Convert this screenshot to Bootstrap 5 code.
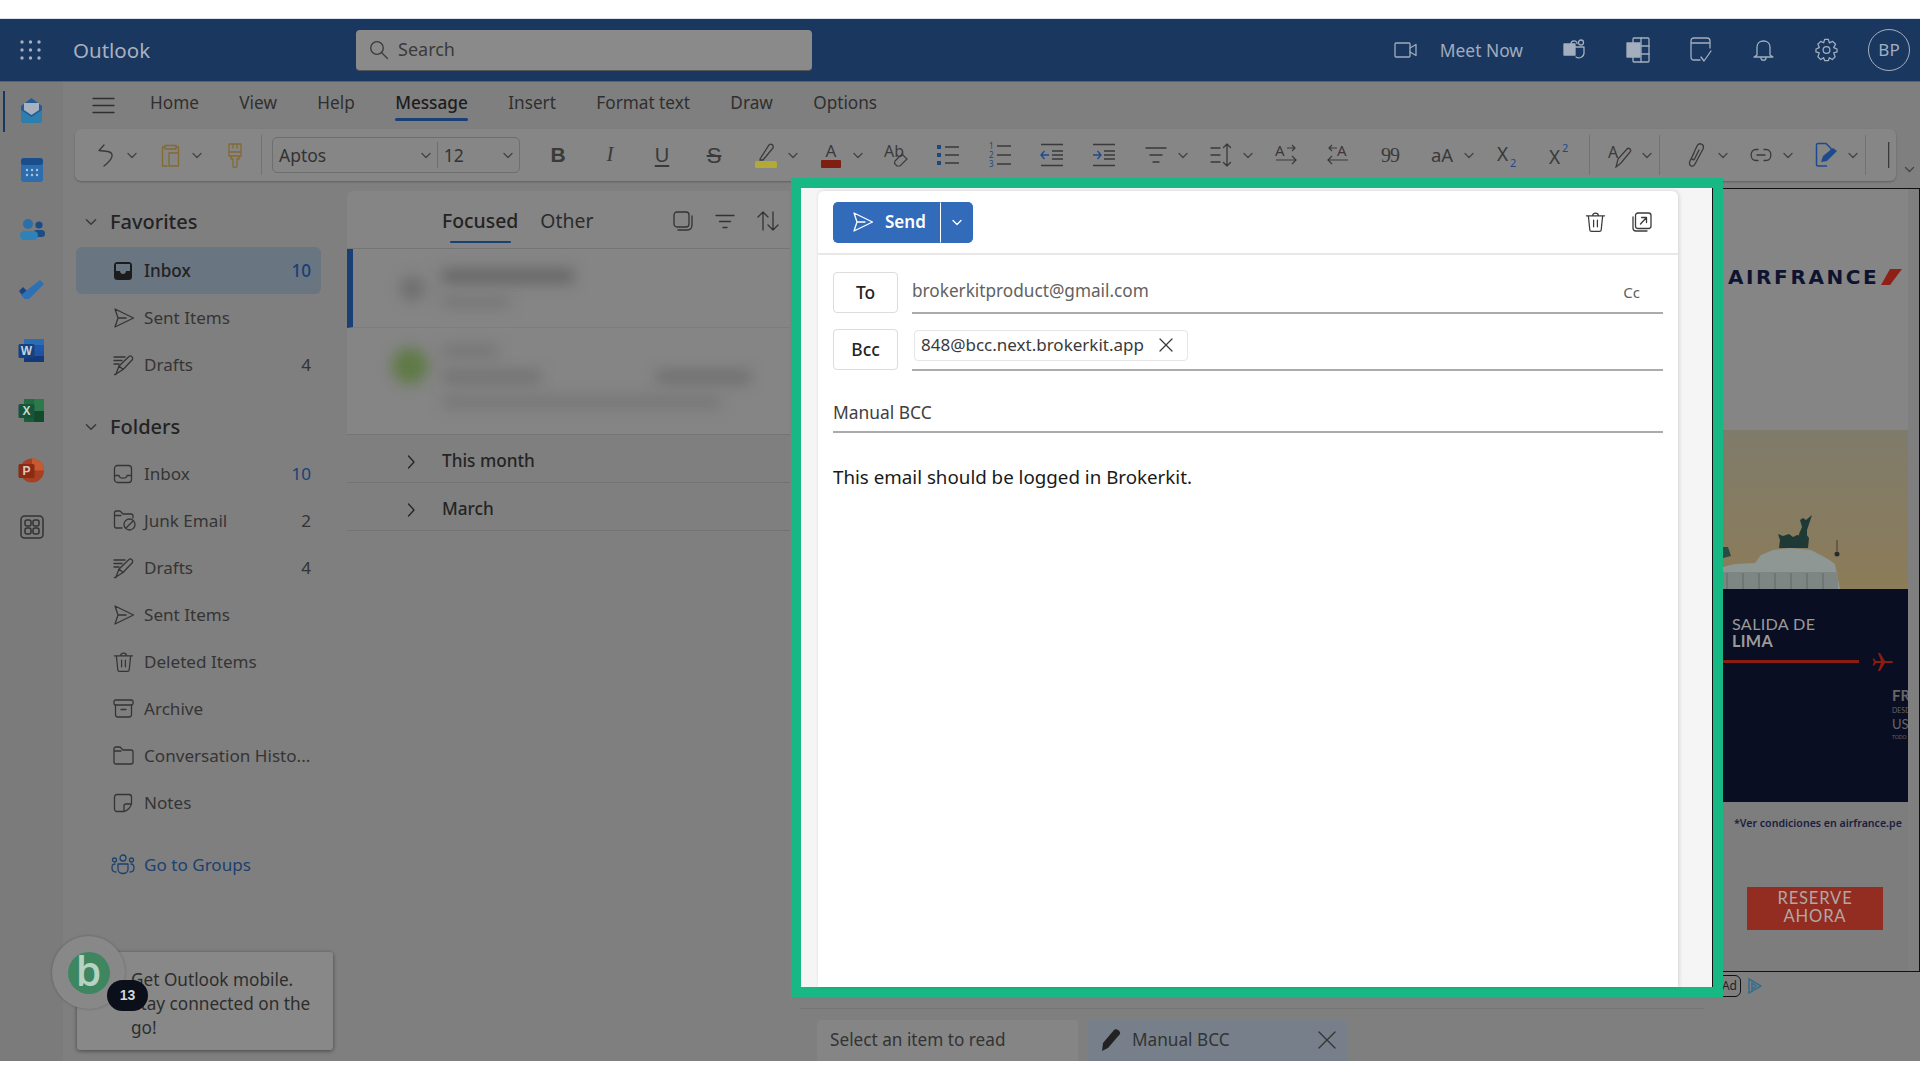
<!doctype html>
<html lang="en">
<head>
<meta charset="utf-8">
<title>Outlook</title>
<link href="https://cdn.jsdelivr.net/npm/bootstrap@5.3.0/dist/css/bootstrap.min.css" rel="stylesheet">
<style>
html,body{height:100%;margin:0;background:#fff;overflow:hidden}
body{font-family:"Noto Sans","Open Sans",sans-serif;color:#2b2b2b}
.topgap{height:18px;background:#fff;border-bottom:1px solid #dbe3ee;box-sizing:content-box}
.app{height:1042px;position:relative;background:#7f7f7f;overflow:hidden}
.ico{fill:none;stroke:currentColor;stroke-width:1.3;stroke-linecap:round;stroke-linejoin:round;flex:none}
.hdr{height:63px;background:#1a3760;color:#a5afbd;border-bottom:1px solid #52647d}
.grid-ic{margin-left:20px;width:21px;height:20px;color:#a5afbd}
.brand{margin-left:32px;font-size:20.5px;width:283px;color:#a9b1bd}
.searchbox{width:456px;height:41px;background:#8a8a8a;border-radius:4px;border-bottom:1px solid #555;color:#3a3a3a;font-size:18px;padding-left:13px;gap:9px}
.meet{font-size:17.4px;gap:23px;margin-right:20px;color:#a0acbc}
.hcell{width:63px;justify-content:center;color:#a3afbe}
.avatar-bp{width:42px;height:42px;border-radius:50%;border:1px solid #a3afbe;font-size:17px;margin:0 10px 0 10px;color:#a3afbe}
.rail{width:63px;background:#7b7b7b;padding-top:13px;gap:30px}
.rail-item{height:30px;position:relative;justify-content:center;align-items:center}
.rail-item.on::before{content:"";position:absolute;left:3px;top:-4px;height:41px;width:2px;background:#1a3760}
.rail-item.last{margin-top:-3px}
.mainc{width:1857px}
.ribbon{height:47px;padding-left:29px;font-size:17.2px;color:#2f2f2f}
.rib-tabs{gap:40.4px;margin-left:35px}
.rib-tab{position:relative;height:47px;display:flex;align-items:center;padding-bottom:5px}
.rib-tab.on{font-weight:500;color:#1c1c1c}
.rib-tab.on::after{content:"";position:absolute;left:0;right:0;bottom:8px;height:3px;border-radius:2px;background:#1a3f75}
.tbar-row{height:52px;padding-left:12px}
.tbar{width:1821px;height:52px;background:#868686;border-radius:6px;box-shadow:0 1px 2px rgba(0,0,0,.25);padding-left:4px;color:#3a3a3a}
.tool{width:52px;height:52px;display:flex;align-items:center;justify-content:center;flex:none;font-size:21px}
.tool-c{width:65px;height:52px;display:flex;align-items:center;flex:none}
.tool-c>.tool{flex:none}
.tool-q{font-size:20px;letter-spacing:-1px;font-family:"Liberation Serif",serif}
.tool-a{font-size:18.5px}
.after-sep{margin-left:10px}
.undo-shift{margin-left:4px}
.chv{width:10px;height:7px;margin-left:-4px;color:#444}
.chv-end{width:11px;margin:0 0 8px 8px}
.tsep{width:1px;height:40px;background:#727272;flex:none}
.combo{width:248px;height:36px;border:1px solid #6e6e6e;border-radius:5px;font-size:17.5px;margin-left:10px;margin-right:12px;color:#333}
.combo-a{width:166px;border-right:1px solid #6e6e6e;padding:0 6px;justify-content:space-between}
.combo-b{width:82px;padding:0 6px;justify-content:space-between}
.tb-b{font-weight:700;font-family:"Liberation Sans",sans-serif}
.tb-i{font-style:italic;font-family:"Liberation Serif",serif}
.tb-u{text-decoration:underline;font-weight:400;font-size:20px;font-family:"Liberation Sans",sans-serif;text-underline-offset:3px}
.tb-s{text-decoration:line-through;font-size:22px;font-family:"Liberation Sans",sans-serif}
.caret-line{margin-left:22px}
.workarea{height:880px}
.foldp{width:284px;padding-top:17px;font-size:17.1px;color:#333}
.fgroup{height:47px;font-size:20px;font-weight:500;padding-left:22px;gap:13px;color:#232323}
.fitems{margin-left:13px;width:245px;margin-top:2px}
.fitems.second{margin-top:0}
.fitem{height:47px;padding:0 10px 0 37px;color:#353535;border-radius:6px}
.fitem .ficon{width:31px;flex:none;display:flex;align-items:center}
.fitem .cnt{margin-left:auto;color:#333}
.fitem .blue{color:#1a3f75}
.fitem.sel{background:#6a7582;font-weight:500;color:#222}
.gotogrp{color:#1c406f;margin-top:15px}
.grp-ic{color:#1c406f;margin-left:-2px}
.chev-d{color:#3a3a3a}
.folders-head{margin-top:15px}
.mobtip{margin:auto 0 11px 14px;width:256px;height:98px;background:#888;border-radius:3px;box-shadow:0 1px 4px rgba(0,0,0,.45);padding:16px 10px 0 54px;font-size:17.2px;line-height:24px;color:#2d2d2d}
.listp{width:443px}
.list-head{margin-top:10px;height:58px;background:#858585;border-bottom:1px solid #757575;border-top-left-radius:6px;font-size:19.4px;color:#2b2b2b;position:relative;padding-top:3px}
.ltab1{margin-left:95px;font-weight:500;position:relative;color:#232323}
.ltab1::after{content:"";position:absolute;left:8px;right:7px;bottom:-7px;height:2px;background:#1a3f75;border-radius:2px}
.ltab2{margin-left:22px}
.lh-icons{margin-left:auto;gap:22px;margin-right:11px;color:#333}
.blurrows{height:186px;background:#858585;border-bottom:1px solid #747474;overflow:hidden}
.brow1{height:79px;border-left:6px solid #1a3f75;padding-left:47px;gap:0;border-bottom:1px solid #7d7d7d}
.brow2{height:105px;padding-left:45px}
.blob{display:block;filter:blur(7px)}
.bl-ava1{width:25px;height:25px;border-radius:50%;background:#6f6f6f;margin-right:17px}
.bl-ava2{width:36px;height:36px;border-radius:50%;background:#5f7a46;margin:0 15px 0 0;align-self:flex-start;margin-top:20px}
.bl-a{width:132px;height:14px;background:#666}
.bl-b{width:68px;height:10px;background:#747474;margin-top:14px}
.bl-c{width:55px;height:12px;background:#757575;margin-top:17px}
.bl-d{width:98px;height:14px;background:#737373}
.bl-e{width:95px;height:14px;background:#707070}
.bl-f{width:278px;height:12px;background:#767676;margin-top:12px}
.bl-gap{gap:115px;margin-top:13px}
.grp-row{height:48px;border-bottom:1px solid #737373;font-size:17.2px;font-weight:500;color:#242424;padding-top:5px}
.grp-row .ic-wrap{width:95px;padding-left:60px}
.readc{width:922px}
.tilesep{margin:auto 8px 11px 10px;height:1px;background:#757575}
.tiles{gap:9px;padding-left:27px;height:41px}
.tile{width:261px;height:41px;border-radius:4px 4px 0 0;font-size:17.2px;padding:0 12px 2px 13px;background:#858585;color:#333}
.tile.act{background:#77808a}
.pen-ic{margin-right:10px}
.adc{width:208px}
.adframe{margin-top:7px;height:784px;border:1px solid #111;overflow:hidden}
.adinner{width:195px;height:100%;background:#858585;display:flex;flex-direction:column}
.ad-top{height:241px;padding:76px 0 0 15px;gap:3px}
.af-name{font-family:"DejaVu Sans",sans-serif;font-weight:700;font-size:20px;letter-spacing:2.6px;color:#0e1430;line-height:24px;white-space:nowrap;margin-right:-1px}
.af-slash{margin-top:4px}
.ad-sky{height:159px;display:block;background:linear-gradient(#7f7b6b,#8c7c58)}
.ad-navy{height:213px;background:#0a0e22;position:relative;overflow:hidden;color:#9a9a9a;font-family:"Lato","Open Sans",sans-serif}
.salida{padding:26px 0 0 19px;font-size:16.2px;line-height:17px;letter-spacing:.3px}
.salida b{font-weight:700}
.redln{margin-top:11px;width:146px;height:3px;background:#8a1c12}
.plane-red{position:absolute;left:159px;top:64px;color:#8a1c12}
.fr-bits{position:absolute;left:179px;top:99px;line-height:1;color:#666}
.fr-1{font-size:15px;font-weight:700}
.fr-2{font-size:7px;margin-top:4px}
.fr-3{font-size:13px;margin-top:4px}
.fr-4{font-size:5px;margin-top:4px}
.ad-note{font-size:10.6px;color:#1a2040;font-weight:600;height:43px;background:#7d7d7d;padding-left:21px;line-height:43px;white-space:nowrap}
.ad-cta{margin:42px 0 0 34px;width:136px;height:43px;background:#932d21;color:#b0a7a5;font-size:16.6px;line-height:18px;text-align:center;padding-top:2px;font-family:"Lato","Open Sans",sans-serif;letter-spacing:.8px}
.adinner .fill{flex:1;background:#7d7d7d}
.ad-mark{margin-top:2px;height:24px;gap:7px;color:#356e8c}
.ad-tag{width:29px;height:22px;border:1px solid #111;border-radius:6px;font-size:12px;color:#222;text-align:right;padding-right:3px;line-height:20px}
.spot{position:absolute;left:791px;top:159px;width:932px;height:819px;border:10px solid #17b884;background:#f5f5f5;padding:3px 0 0 17px}
.spot-line{position:absolute;right:0;top:0;bottom:0;width:1px;background:#111}
.compose{width:860px;background:#fff;height:100%;border-radius:6px 6px 0 0;box-shadow:1px 0 4px rgba(0,0,0,.14);color:#242424}
.cp-head{height:64px;border-bottom:2px solid #e8e8e8;padding:0 26px 0 15px}
.btn.sendb,.btn.sendc{background:#316bba;border-color:#316bba;color:#fff;font-size:17px;font-weight:600;height:41px;padding:0;display:flex;align-items:center}
.btn.sendb{width:108px;padding-left:18px;gap:11px;border-right:0;border-radius:5px 0 0 5px}
.btn.sendc{width:33px;justify-content:center;border-left:1px solid #fff;border-radius:0 5px 5px 0}
.cp-actions{gap:26px;color:#3b3b3b}
.cp-body{padding:17px 15px 0}
.cp-row{gap:14px;height:41px}
.cp-row+.cp-row{margin-top:16px}
.lblbtn{width:65px;height:41px;border:1px solid #dcdcdc;border-radius:4px;font-size:17.4px;font-weight:500;background:#fff;color:#242424;padding:0}
.cp-field{flex:1;border-bottom:2px solid #ababab;height:42px;font-size:17.2px;color:#616161;padding-bottom:3px}
.cc-lbl{margin-left:auto;font-size:15px;margin-right:23px;padding-top:3px}
.chip-rec{height:31px;margin-left:2px;padding:0 9px 0 6px;border:1px solid #e6e6e6;border-radius:4px;color:#3a3a3a;gap:15px;margin-top:-5px;width:274px;white-space:nowrap;font-size:17px}
.subj{height:63px;border-bottom:2px solid #ababab;font-size:17.4px;color:#404040;padding-top:29px}
.mailtxt{margin-top:32px;font-size:18.75px;line-height:24px;color:#1a1a1a}
.bub{position:absolute;left:52px;top:917px;width:73px;height:73px;border-radius:50%;background:#888;box-shadow:0 0 3px rgba(0,0,0,.25);display:flex;align-items:center;justify-content:center}
.bub-in{width:42px;height:42px;border-radius:50%;background:#3d8660;color:#b6d2c2;font-size:41px;font-weight:600;line-height:36px;text-align:center;font-family:"Open Sans",sans-serif;overflow:hidden}
.bub-n{position:absolute;left:107px;top:961px;width:41px;height:31px;border-radius:16px;background:#0a0f1a;color:#d6d6d6;font-size:14px;font-weight:700;text-align:center;line-height:31px;font-family:"Liberation Sans",sans-serif}
.x-close{color:#333}
</style>
</head>
<body>
<svg width="0" height="0" class="position-absolute">
<defs>
<symbol id="chev" viewBox="0 0 10 7"><path d="M1 1.500 5 5.500 9 1.500"/></symbol>
<symbol id="chevr" viewBox="0 0 8 14"><path d="M1.500 1 7 7 1.500 13"/></symbol>
<symbol id="plane" viewBox="0 0 22 22"><path d="M2 2 20.500 11 2 20 5 11ZM5 11H13"/></symbol>
<symbol id="draft" viewBox="0 0 22 22"><path d="M1 3H12M1 6.500H9M1 10H6M3 20 6 12 16 2.500C17.500 1 20.500 3 19.500 5.500L10 15.500ZM6 12 10 15.500M1.500 20.500H3"/></symbol>
<symbol id="inboxi" viewBox="0 0 20 20"><rect x="1.500" y="1.500" width="17" height="17" rx="3"/><path d="M1.500 11.500H6C6.500 15 13.500 15 14 11.500H18.500"/></symbol>
<symbol id="trash" viewBox="0 0 22 22"><path d="M1.500 4.500H20.500M3.500 4.500 5 19C5 20 6 20.800 7 20.800H15C16 20.800 17 20 17 19L18.500 4.500M8 4.500C8 .8 14 .8 14 4.500M9 9V16M13 9V16"/></symbol>
<symbol id="popout" viewBox="0 0 20 20"><rect x="3.500" y="1" width="15.500" height="15.500" rx="2.500"/><path d="M1 5V16C1 18 2 19 4 19H15M8.500 12 14.500 5.500M9.500 5.500H14.500V10.500"/></symbol>
</defs>
</svg>

<div class="topgap"></div>
<div class="app d-flex flex-column">
  <header class="hdr d-flex align-items-center">
    <svg class="grid-ic" viewBox="0 0 21 20" fill="currentColor"><circle cx="2" cy="2" r="1.700"/><circle cx="10.500" cy="2" r="1.700"/><circle cx="19" cy="2" r="1.700"/><circle cx="2" cy="10" r="1.700"/><circle cx="10.500" cy="10" r="1.700"/><circle cx="19" cy="10" r="1.700"/><circle cx="2" cy="18" r="1.700"/><circle cx="10.500" cy="18" r="1.700"/><circle cx="19" cy="18" r="1.700"/></svg>
    <div class="brand">Outlook</div>
    <div class="searchbox d-flex align-items-center">
      <svg class="ico" width="20" height="20" viewBox="0 0 20 20"><circle cx="8" cy="8" r="6.300"/><path d="M12.500 12.500 18.500 18.500"/></svg>
      <span>Search</span>
    </div>
    <div class="ms-auto d-flex align-items-center">
      <div class="meet d-flex align-items-center">
        <svg class="ico" width="23" height="18" viewBox="0 0 23 18"><rect x="1" y="2" width="15" height="14" rx="1"/><path d="M16 7 22 3.500V14.500L16 11"/></svg>
        <span>Meet Now</span>
      </div>
      <div class="hcell d-flex"><svg class="ico" width="23" height="24" viewBox="0 0 23 24"><rect x="1" y="6" width="11" height="11" fill="currentColor"/><path d="M12 9H21V15C21 19 16 21 13 19M8 6C8 2 14 2 14 5.500"/><circle cx="18" cy="4.500" r="2.500"/></svg></div>
      <div class="hcell d-flex"><svg class="ico" width="24" height="26" viewBox="0 0 24 26"><rect x="7" y="1" width="16" height="24" rx="1"/><path d="M15 1V25M15 9H23M15 17H23"/><rect x="1" y="6" width="13" height="14" fill="currentColor"/></svg></div>
      <div class="hcell d-flex"><svg class="ico" width="24" height="26" viewBox="0 0 24 26"><path d="M11 23H5C3 23 2 22 2 20V4C2 2 3 1 5 1H18C20 1 21 2 21 4V11M2 6H21M12 20 15 24 22 14"/></svg></div>
      <div class="hcell d-flex"><svg class="ico" width="21" height="24" viewBox="0 0 21 24"><path d="M4 17V9C4 1 17 1 17 9V17L20 19H1ZM8 20C8 23 13 23 13 20"/></svg></div>
      <div class="hcell d-flex"><svg class="ico" width="23" height="24" viewBox="0 0 24 24"><circle cx="12" cy="12" r="3.500"/><path d="M10 1H14L15 4.500 18.500 3 21.500 6 19.500 9.500 23 11V14L19.500 15 21 19 18 22 15 20 14 23H10L9 20 6 22 3 19 4.500 15 1 14V11L4.500 9.500 3 6 6 3 9 4.500Z"/></svg></div>
      <div class="avatar-bp d-flex align-items-center justify-content-center">BP</div>
    </div>
  </header>
  <div class="d-flex flex-grow-1">
    <nav class="rail d-flex flex-column">
      <div class="rail-item on d-flex"><svg width="27" height="27" viewBox="0 0 27 27"><path d="M3 9 13.500 1 24 9V22C24 25 22 26 20 26H7C5 26 3 25 3 22Z" fill="#235d99"/><path d="M6 6H21V13L13.500 18 6 13Z" fill="#a8b2bd"/><path d="M3 13 13.500 20 24 13V22C24 25 22 26 20 26H7C5 26 3 25 3 22Z" fill="#2f7fae"/></svg></div>
      <div class="rail-item d-flex"><svg width="24" height="26" viewBox="0 0 24 26"><rect x="1" y="1" width="22" height="24" rx="3" fill="#2d6dae"/><rect x="1" y="1" width="22" height="7" rx="3" fill="#1b4e8c"/><g fill="#a9c4dd"><circle cx="7" cy="13" r="1.200"/><circle cx="12" cy="13" r="1.200"/><circle cx="17" cy="13" r="1.200"/><circle cx="7" cy="18" r="1.200"/><circle cx="12" cy="18" r="1.200"/><circle cx="17" cy="18" r="1.200"/></g></svg></div>
      <div class="rail-item d-flex"><svg width="26" height="22" viewBox="0 0 26 22"><circle cx="9" cy="5" r="5" fill="#2b6fa9"/><circle cx="20" cy="6" r="3.600" fill="#1a4d83"/><rect x="14" y="11" width="12" height="7" rx="3.500" fill="#1a4d83"/><rect x="1" y="12" width="18" height="9" rx="4.500" fill="#2e82b8"/></svg></div>
      <div class="rail-item d-flex"><svg width="27" height="22" viewBox="0 0 27 22"><path d="M1 12 5 8 11 14 7 20Z" fill="#1a4480"/><path d="M7 20 3 16 22 1 26 5 11 20Z" fill="#2d70b5"/></svg></div>
      <div class="rail-item d-flex"><svg width="27" height="25" viewBox="0 0 27 25"><rect x="6" y="1" width="20" height="23" rx="1" fill="#1f52a0"/><rect x="6" y="1" width="20" height="6" fill="#2a6db5"/><rect x="6" y="7" width="20" height="6" fill="#1f58a8"/><rect x="6" y="18" width="20" height="6" fill="#13397a"/><rect x="0.500" y="6" width="16" height="14" rx="1.500" fill="#15417f"/><text x="8.500" y="17" font-size="12" font-weight="700" text-anchor="middle" fill="#c8d2de" font-family="Liberation Sans">W</text></svg></div>
      <div class="rail-item d-flex"><svg width="27" height="25" viewBox="0 0 27 25"><rect x="6" y="1" width="20" height="23" rx="1" fill="#1a5c38"/><rect x="16" y="1" width="10" height="12" fill="#2c7a4c"/><rect x="6" y="1" width="10" height="6" fill="#256b42"/><rect x="16" y="13" width="10" height="11" fill="#124a2c"/><rect x="0.500" y="6" width="16" height="14" rx="1.500" fill="#17553a"/><text x="8.500" y="17" font-size="12" font-weight="700" text-anchor="middle" fill="#c8d6cd" font-family="Liberation Sans">X</text></svg></div>
      <div class="rail-item d-flex"><svg width="27" height="25" viewBox="0 0 27 25"><circle cx="14" cy="12.500" r="12" fill="#a83f22"/><path d="M14 .5A12 12 0 0 1 26 12.500H14Z" fill="#c75a32"/><rect x="0.500" y="6" width="16" height="14" rx="1.500" fill="#8a2b14"/><text x="8.500" y="17" font-size="12" font-weight="700" text-anchor="middle" fill="#dac8c0" font-family="Liberation Sans">P</text></svg></div>
      <div class="rail-item last d-flex"><svg width="24" height="24" viewBox="0 0 24 24" fill="none" stroke="#333" stroke-width="1.500"><rect x="1" y="1" width="22" height="22" rx="3.500"/><rect x="5" y="5" width="6" height="6" rx="2"/><rect x="13" y="5" width="6" height="6" rx="2"/><rect x="5" y="13" width="6" height="6" rx="2"/><rect x="13" y="13" width="6" height="6" rx="2"/></svg></div>
    </nav>
    <div class="mainc d-flex flex-column">
      <div class="ribbon d-flex align-items-center">
        <svg class="ico" width="23" height="17" viewBox="0 0 23 17"><path d="M1 1.500H22M1 8.500H22M1 15.500H22"/></svg>
        <div class="rib-tabs d-flex">
          <span class="rib-tab">Home</span><span class="rib-tab">View</span><span class="rib-tab">Help</span><span class="rib-tab on">Message</span><span class="rib-tab">Insert</span><span class="rib-tab">Format text</span><span class="rib-tab">Draw</span><span class="rib-tab">Options</span>
        </div>
      </div>
      <div class="tbar-row d-flex align-items-end">
        <div class="tbar d-flex align-items-center">
          <div class="tool-c"><div class="tool"><svg class="ico undo-shift" width="20" height="24" viewBox="0 0 20 24"><path d="M7 2 2 7.500 11 8.500C17 10 17 15 7 23"/></svg></div><svg class="ico chv"><use href="#chev"/></svg></div>
          <div class="tool-c"><div class="tool"><svg class="ico" width="19" height="23" viewBox="0 0 19 23" color="#826a33"><path d="M4 3H1.500V22H6M15 3H17.500V8M4 1.500H15V5H4ZM8 9H17.500V22H8Z"/></svg></div><svg class="ico chv"><use href="#chev"/></svg></div>
          <div class="tool"><svg class="ico" width="16" height="25" viewBox="0 0 16 25" color="#826a33"><path d="M2 1H14V13H2ZM2 9H14M6 1V5M10 1V5M4 13V16H6V23C6 25 10 25 10 23V16H12V13"/></svg></div>
          <div class="tsep"></div>
          <div class="combo d-flex align-items-center">
            <div class="combo-a d-flex align-items-center"><span>Aptos</span><svg class="ico chv"><use href="#chev"/></svg></div>
            <div class="combo-b d-flex align-items-center"><span>12</span><svg class="ico chv"><use href="#chev"/></svg></div>
          </div>
          <div class="tool tb-b">B</div>
          <div class="tool tb-i">I</div>
          <div class="tool tb-u">U</div>
          <div class="tool tb-s">S</div>
          <div class="tool-c"><div class="tool"><svg width="24" height="25" viewBox="0 0 24 25"><path d="M6 16 15 2C17 0 20 2 19 5L9 17H6Z" fill="none" stroke="#3a3a3a" stroke-width="1.300"/><rect x="1" y="18" width="22" height="7" rx="1.500" fill="#b3a936"/></svg></div><svg class="ico chv"><use href="#chev"/></svg></div>
          <div class="tool-c"><div class="tool"><svg width="22" height="26" viewBox="0 0 22 26"><text x="11" y="15" text-anchor="middle" font-size="17" font-family="Noto Sans" fill="#3a3a3a">A</text><rect x="1" y="18" width="20" height="8" rx="1" fill="#7f1f12"/></svg></div><svg class="ico chv"><use href="#chev"/></svg></div>
          <div class="tool"><svg width="24" height="26" viewBox="0 0 24 26"><text x="0" y="15" font-size="16" font-family="Noto Sans" fill="#3a3a3a">Ab</text><path d="M11 19 18 12 23 17 16 24H13L10.500 21.500Z" fill="none" stroke="#3a3a3a" stroke-width="1.200"/></svg></div>
          <div class="tool"><svg width="24" height="22" viewBox="0 0 24 22"><path d="M9 3H23M9 11H23M9 19H23" stroke="#3a3a3a" stroke-width="1.500"/><rect x="1" y="1" width="4" height="4" fill="#1d4a7c"/><rect x="1" y="9" width="4" height="4" fill="#1d4a7c"/><rect x="1" y="17" width="4" height="4" fill="#1d4a7c"/></svg></div>
          <div class="tool"><svg width="24" height="26" viewBox="0 0 24 26"><path d="M9 4H23M9 13H23M9 22H23" stroke="#3a3a3a" stroke-width="1.500"/><text x="1" y="7" font-size="8" fill="#1d4a7c" font-family="Noto Sans">1</text><text x="1" y="16" font-size="8" fill="#1d4a7c" font-family="Noto Sans">2</text><text x="1" y="25" font-size="8" fill="#1d4a7c" font-family="Noto Sans">3</text></svg></div>
          <div class="tool"><svg width="24" height="24" viewBox="0 0 24 24"><path d="M1 1.500H23M12 8H23M12 12H23M12 16H23M1 22.500H23" stroke="#3a3a3a" stroke-width="1.300"/><path d="M9 12H1M4.500 8 1 12 4.500 16" fill="none" stroke="#1d4a8c" stroke-width="1.300"/></svg></div>
          <div class="tool"><svg width="24" height="24" viewBox="0 0 24 24"><path d="M1 1.500H23M12 8H23M12 12H23M12 16H23M1 22.500H23" stroke="#3a3a3a" stroke-width="1.300"/><path d="M1 12H9M5.500 8 9 12 5.500 16" fill="none" stroke="#1d4a8c" stroke-width="1.300"/></svg></div>
          <div class="tool-c"><div class="tool"><svg class="ico" width="22" height="18" viewBox="0 0 22 18"><path d="M1 2H21M5 9H17M8 16H14"/></svg></div><svg class="ico chv"><use href="#chev"/></svg></div>
          <div class="tool-c"><div class="tool"><svg class="ico" width="22" height="24" viewBox="0 0 22 24"><path d="M1 5H10M1 12H10M1 19H10M17 1V23M13.500 4.500 17 1 20.500 4.500M13.500 19.500 17 23 20.500 19.500"/></svg></div><svg class="ico chv"><use href="#chev"/></svg></div>
          <div class="tool"><svg width="22" height="26" viewBox="0 0 22 26"><text x="0" y="14" font-size="15" font-family="Noto Sans" fill="#3a3a3a">A</text><path d="M1 18H21M17 14 21 18 17 22M12 6H20M17 3 20 6 17 9" fill="none" stroke="#3a3a3a" stroke-width="1.200"/></svg></div>
          <div class="tool"><svg width="22" height="26" viewBox="0 0 22 26"><text x="10" y="14" font-size="15" font-family="Noto Sans" fill="#3a3a3a">A</text><path d="M21 18H1M5 14 1 18 5 22M10 6H2M5 3 2 6 5 9" fill="none" stroke="#3a3a3a" stroke-width="1.200"/></svg></div>
          <div class="tool tool-q">99</div>
          <div class="tool-c"><div class="tool tool-a">aA</div><svg class="ico chv"><use href="#chev"/></svg></div>
          <div class="tool"><svg width="24" height="26" viewBox="0 0 24 26"><text x="2" y="19" font-size="19" font-family="Noto Sans" fill="#3a3a3a">X</text><text x="15" y="25" font-size="11" font-family="Noto Sans" fill="#1d4a8c">2</text></svg></div>
          <div class="tool"><svg width="24" height="26" viewBox="0 0 24 26"><text x="2" y="22" font-size="19" font-family="Noto Sans" fill="#3a3a3a">X</text><text x="15" y="10" font-size="11" font-family="Noto Sans" fill="#1d4a8c">2</text></svg></div>
          <div class="tsep ms-1"></div>
          <div class="tool-c ms-1"><div class="tool"><svg width="24" height="25" viewBox="0 0 24 25"><text x="0" y="15" font-size="16" font-family="Noto Sans" fill="#3a3a3a">A</text><path d="M8 24 10 16 19 6C21 4 24 7 22 9L13 20Z" fill="none" stroke="#3a3a3a" stroke-width="1.200"/></svg></div><svg class="ico chv"><use href="#chev"/></svg></div>
          <div class="tsep"></div>
          <div class="tool-c after-sep"><div class="tool"><svg class="ico" width="18" height="25" viewBox="0 0 18 25"><path d="M7 10 3 18C1 23 6 25 8 21L16 6C18 1 12 -1 10 3L5 14C4 17 7 18 8 15L12 7"/></svg></div><svg class="ico chv"><use href="#chev"/></svg></div>
          <div class="tool-c"><div class="tool"><svg class="ico" width="22" height="14" viewBox="0 0 22 14"><path d="M8 1.500H6C-.5 1.500 -.5 12.500 6 12.500H8M14 1.500H16C22.500 1.500 22.500 12.500 16 12.500H14M7 7H15"/></svg></div><svg class="ico chv"><use href="#chev"/></svg></div>
          <div class="tool-c"><div class="tool"><svg width="22" height="26" viewBox="0 0 22 26"><path d="M12 24H3C2 24 1.500 23.500 1.500 22.500V3C1.500 2 2 1.500 3 1.500H11L16 6.500V9" fill="none" stroke="#1d4a8c" stroke-width="1.500"/><path d="M6 20 8 14 18 6 22 9 12 19Z" fill="#1d4a8c"/></svg></div><svg class="ico chv"><use href="#chev"/></svg></div>
          <div class="tsep"></div>
          <div class="d-flex align-items-center caret-line"><svg width="2" height="26"><rect width="1.300" height="26" fill="#3a3a3a"/></svg></div>
        </div>
        <svg class="ico chv chv-end"><use href="#chev"/></svg>
      </div>
      <div class="workarea d-flex">
        <aside class="foldp d-flex flex-column">
          <div class="fgroup d-flex align-items-center"><svg class="ico chev-d" width="12" height="8"><use href="#chev"/></svg><span>Favorites</span></div>
          <div class="fitems">
            <div class="fitem sel d-flex align-items-center"><span class="ficon"><svg width="20" height="20" viewBox="0 0 20 20"><rect x="1" y="1" width="18" height="18" rx="3.500" fill="#1c1c1c"/><path d="M3 3H17V10H13C13 14 7 14 7 10H3Z" fill="#6a7582"/></svg></span>Inbox<span class="cnt blue">10</span></div>
            <div class="fitem d-flex align-items-center"><span class="ficon"><svg class="ico" width="22" height="22"><use href="#plane"/></svg></span>Sent Items</div>
            <div class="fitem d-flex align-items-center"><span class="ficon"><svg class="ico" width="22" height="22"><use href="#draft"/></svg></span>Drafts<span class="cnt">4</span></div>
          </div>
          <div class="fgroup folders-head d-flex align-items-center"><svg class="ico chev-d" width="12" height="8"><use href="#chev"/></svg><span>Folders</span></div>
          <div class="fitems second">
            <div class="fitem d-flex align-items-center"><span class="ficon"><svg class="ico" width="20" height="20"><use href="#inboxi"/></svg></span>Inbox<span class="cnt blue">10</span></div>
            <div class="fitem d-flex align-items-center"><span class="ficon"><svg class="ico" width="23" height="21" viewBox="0 0 23 21"><path d="M9 18H3C2 18 1.500 17 1.500 16V3C1.500 2 2 1 3 1H7L10 4H18C19 4 20 5 20 6V8M1.500 5.500H8"/><circle cx="16.500" cy="14.500" r="5.500"/><path d="M13 18 20 11"/></svg></span>Junk Email<span class="cnt">2</span></div>
            <div class="fitem d-flex align-items-center"><span class="ficon"><svg class="ico" width="22" height="22"><use href="#draft"/></svg></span>Drafts<span class="cnt">4</span></div>
            <div class="fitem d-flex align-items-center"><span class="ficon"><svg class="ico" width="22" height="22"><use href="#plane"/></svg></span>Sent Items</div>
            <div class="fitem d-flex align-items-center"><span class="ficon"><svg class="ico" width="21" height="22"><use href="#trash"/></svg></span>Deleted Items</div>
            <div class="fitem d-flex align-items-center"><span class="ficon"><svg class="ico" width="21" height="19" viewBox="0 0 21 19"><rect x="1" y="1" width="19" height="5" rx="1.500"/><path d="M2.500 6V15.500C2.500 17 3.500 18 5 18H16C17.500 18 18.500 17 18.500 15.500V6M8 10.500H13"/></svg></span>Archive</div>
            <div class="fitem d-flex align-items-center"><span class="ficon"><svg class="ico" width="21" height="19" viewBox="0 0 21 19"><path d="M1 16V3C1 2 1.500 1 3 1H7L10 4H18C19 4 20 5 20 6V16C20 17 19 18 18 18H3C1.500 18 1 17 1 16ZM1 5H8"/></svg></span><span class="text-nowrap">Conversation Histo...</span></div>
            <div class="fitem d-flex align-items-center"><span class="ficon"><svg class="ico" width="20" height="20" viewBox="0 0 20 20"><path d="M11 18.500H4C2.500 18.500 1.500 17.500 1.500 16V4C1.500 2.500 2.500 1.500 4 1.500H16C17.500 1.500 18.500 2.500 18.500 4V11C18 14 14 18 11 18.500ZM11 18.500V13C11 12 12 11 13 11H18.500"/></svg></span>Notes</div>
            <div class="fitem gotogrp d-flex align-items-center"><span class="ficon"><svg class="ico grp-ic" width="24" height="21" viewBox="0 0 24 21"><circle cx="12" cy="4" r="3"/><circle cx="3.500" cy="6" r="2"/><circle cx="20.500" cy="6" r="2"/><path d="M7 10H17V15C17 21 7 21 7 15ZM4 10C1 10 1 12 1 14C1 17 3 18 5 18M20 10C23 10 23 12 23 14C23 17 21 18 19 18"/></svg></span><span>Go to Groups</span></div>
          </div>
          <div class="mobtip">Get Outlook mobile.<br>Stay connected on the go!</div>
        </aside>
        <section class="listp d-flex flex-column">
          <div class="list-head d-flex align-items-center">
            <span class="ltab1">Focused</span><span class="ltab2">Other</span>
            <div class="lh-icons d-flex align-items-center">
              <svg class="ico" width="20" height="20" viewBox="0 0 20 20"><rect x="1" y="1" width="15" height="15" rx="3"/><path d="M19 5V14C19 17 17 19 14 19H5"/></svg>
              <svg class="ico" width="20" height="15" viewBox="0 0 20 15"><path d="M1 1.500H19M4.500 7.500H15.500M8 13.500H12"/></svg>
              <svg class="ico" width="22" height="20" viewBox="0 0 22 20"><path d="M6 19V1M1 6 6 1 11 6M16 1V19M11 14 16 19 21 14"/></svg>
            </div>
          </div>
          <div class="blurrows">
            <div class="brow1 d-flex align-items-center">
              <span class="blob bl-ava1"></span>
              <div><span class="blob bl-a"></span><span class="blob bl-b"></span></div>
            </div>
            <div class="brow2 d-flex">
              <span class="blob bl-ava2"></span>
              <div><span class="blob bl-c"></span><div class="d-flex bl-gap"><span class="blob bl-d"></span><span class="blob bl-e"></span></div><span class="blob bl-f"></span></div>
            </div>
          </div>
          <div class="grp-row d-flex align-items-center"><div class="ic-wrap"><svg class="ico" width="8" height="14"><use href="#chevr"/></svg></div>This month</div>
          <div class="grp-row d-flex align-items-center"><div class="ic-wrap"><svg class="ico" width="8" height="14"><use href="#chevr"/></svg></div>March</div>
        </section>
        <section class="readc d-flex flex-column">
          <div class="tilesep"></div>
          <div class="tiles d-flex">
            <div class="tile d-flex align-items-center">Select an item to read</div>
            <div class="tile act d-flex align-items-center">
              <svg width="22" height="24" viewBox="0 0 22 24" class="pen-ic"><path d="M2 23 3 15 14 2C16 0 21 3 20 6L8 20Z" fill="#222"/></svg>
              <span>Manual BCC</span>
              <svg class="ico ms-auto x-close" width="18" height="18" viewBox="0 0 18 18"><path d="M1 1 17 17M17 1 1 17"/></svg>
            </div>
          </div>
        </section>
        <aside class="adc">
          <div class="adframe">
            <div class="adinner">
              <div class="ad-top d-flex align-items-start">
                <span class="af-name">AIRFRANCE</span>
                <svg class="af-slash" width="22" height="16" viewBox="0 0 22 16"><path d="M9 0H21L9 16H0Z" fill="#8f2015"/></svg>
              </div>
              <svg class="ad-sky" width="195" height="159" viewBox="0 0 195 159">
                <path d="M10 137 22 134 42 133 48 125 60 120 77 118 98 120 115 129 122 134 127 159H10Z" fill="#8f9794"/>
                <path d="M10 142H125V159H10Z" fill="#7d8683"/>
                <path d="M14 143V159M30 143V159M46 143V159M62 143V159M78 143V159M94 143V159M110 143V159" stroke="#6e7774" stroke-width="2"/>
                <path d="M10 117H15L18 126 10 128Z" fill="#2a4a44"/>
                <path d="M65 104 70 106 76 104 80 107 84 105 90 106 93 104 96 108 95 118H66L67 110Z" fill="#1f3a36"/>
                <path d="M86 104 89 97 87 90 90 88 93 90 99 85 96 94 94 100 94 112 86 112Z" fill="#1f3a36"/>
                <circle cx="124" cy="124" r="2.500" fill="#2a2a2a"/><path d="M124 110V121" stroke="#3a3a3a"/>
              </svg>
              <div class="ad-navy">
                <div class="salida">SALIDA DE<br><b>LIMA</b></div>
                <div class="redln"></div>
                <svg class="plane-red" width="22" height="18" viewBox="0 0 22 18"><path d="M21 9C21 8 20 8 18 8H13L8 0H6L9 8H4L2 5.500H.5L2 9 .5 12.500H2L4 10H9L6 18H8L13 10H18C20 10 21 10 21 9Z" fill="currentColor"/></svg>
                <div class="fr-bits"><div class="fr-1">FRA</div><div class="fr-2">DESDE</div><div class="fr-3">USD</div><div class="fr-4">TODO</div></div>
              </div>
              <div class="ad-note">*Ver condiciones en airfrance.pe</div>
              <div class="fill"><div class="ad-cta">RESERVE<br>AHORA</div></div>
            </div>
          </div>
          <div class="ad-mark d-flex align-items-center">
            <span class="ad-tag">Ad</span>
            <svg width="14" height="16" viewBox="0 0 14 16" fill="none" stroke="currentColor" stroke-width="1.500"><path d="M1 1 13 8 1 15ZM4 5 8 8 4 11Z"/></svg>
          </div>
        </aside>
      </div>
    </div>
  </div>

  <div class="spot">
    <span class="spot-line"></span>
    <div class="compose d-flex flex-column">
      <div class="cp-head d-flex align-items-center justify-content-between">
        <div class="btn-group">
          <button class="btn sendb" type="button"><svg class="ico" width="22" height="22"><use href="#plane"/></svg>Send</button>
          <button class="btn sendc" type="button"><svg class="ico" width="10" height="7"><use href="#chev"/></svg></button>
        </div>
        <div class="cp-actions d-flex align-items-center">
          <svg class="ico" width="21" height="22"><use href="#trash"/></svg>
          <svg class="ico" width="20" height="20"><use href="#popout"/></svg>
        </div>
      </div>
      <div class="cp-body">
        <div class="cp-row d-flex">
          <button class="lblbtn" type="button">To</button>
          <div class="cp-field d-flex align-items-center"><span>brokerkitproduct@gmail.com</span><span class="cc-lbl">Cc</span></div>
        </div>
        <div class="cp-row d-flex">
          <button class="lblbtn" type="button">Bcc</button>
          <div class="cp-field d-flex align-items-center">
            <span class="chip-rec d-flex align-items-center"><span>848@bcc.next.brokerkit.app</span><svg class="ico" width="14" height="14" viewBox="0 0 14 14"><path d="M1 1 13 13M13 1 1 13"/></svg></span>
          </div>
        </div>
        <div class="subj">Manual BCC</div>
        <p class="mailtxt">This email should be logged in Brokerkit.</p>
      </div>
    </div>
  </div>
  <div class="bub"><div class="bub-in">b</div></div>
  <div class="bub-n">13</div>
</div>
<script src="https://cdn.jsdelivr.net/npm/bootstrap@5.3.0/dist/js/bootstrap.bundle.min.js"></script>
</body>
</html>
